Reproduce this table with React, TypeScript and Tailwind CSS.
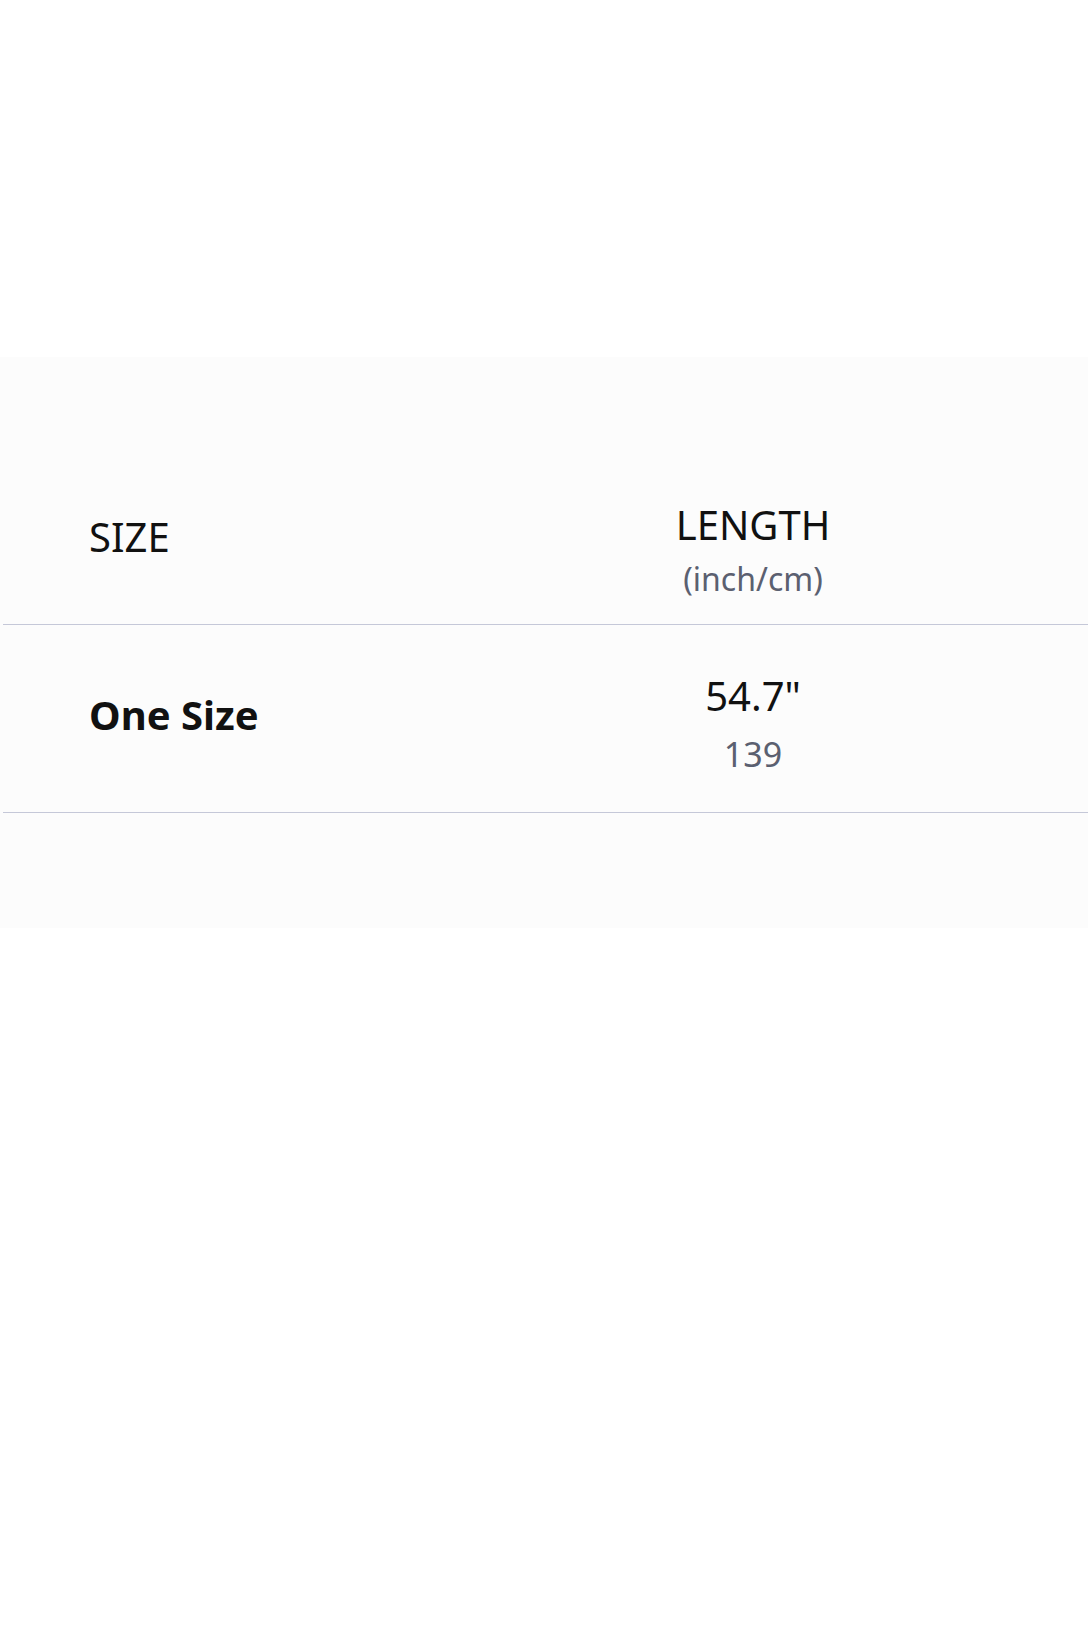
const font = { fontFamily: '"Noto Sans", "Open Sans", sans-serif' };

export default function App() {
  return (
    <div className="min-h-[1632px] w-full bg-white" style={font}>
      <div className="h-[357px]" />
      <section className="bg-[#fcfcfc] pt-[144px] pb-[115px] pl-[3px]">
        <div className="grid grid-cols-[415px_1fr] border-b border-[#c5c8d8] pb-[25px]">
          <div className="pl-[86px] mt-[12px] text-[40px] leading-[48px] text-[#111]">SIZE</div>
          <div className="flex flex-col items-center">
            <div className="text-[40px] leading-[48px] text-[#111]">LENGTH</div>
            <div className="mt-[10px] text-[32px] leading-[40px] text-[#5b6070]">(inch/cm)</div>
          </div>
        </div>
        <div className="grid grid-cols-[415px_1fr] border-b border-[#c5c8d8] pt-[47px] pb-[38px]">
          <div className="pl-[86px] mt-[19px] text-[40px] leading-[48px] font-bold text-[#111]">One Size</div>
          <div className="flex flex-col items-center">
            <div className="text-[40px] leading-[48px] text-[#111]">54.7"</div>
            <div className="mt-[14px] text-[34px] leading-[40px] text-[#5b6070]">139</div>
          </div>
        </div>
      </section>
    </div>
  );
}
